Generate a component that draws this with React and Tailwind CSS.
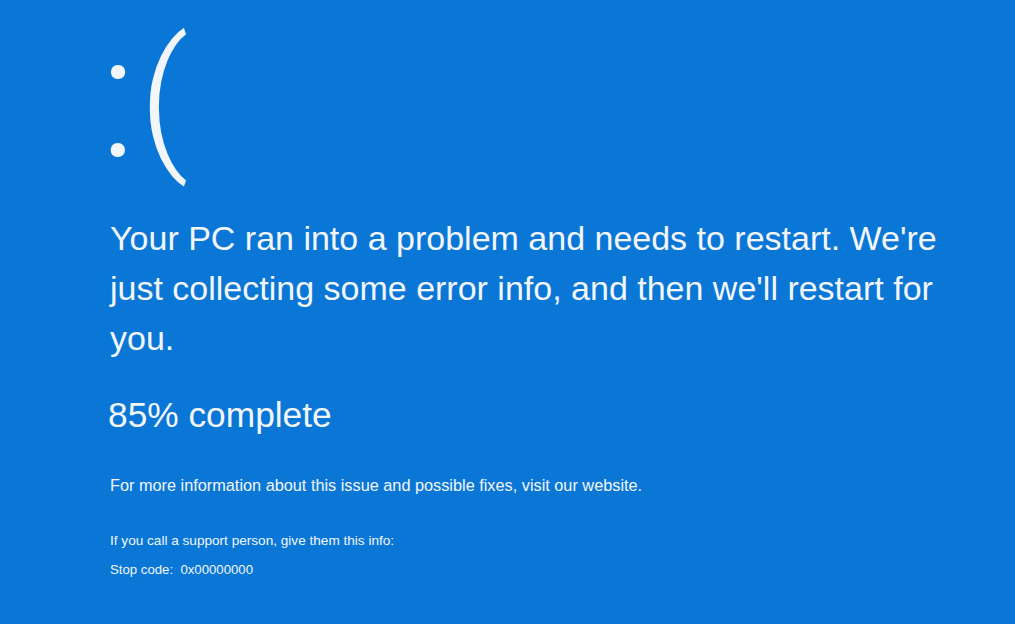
export default function App() {
  return (
    <div
      className="w-[1015px] h-[624px] overflow-hidden bg-[#0a77d6] text-[#f2f6fb] pl-[110px] flex flex-col"
      style={{ fontFamily: '"Liberation Sans", Arial, sans-serif' }}
    >
      <div className="flex items-start h-[200px] -ml-[10px]" style={{ fontFamily: 'Roboto, "Liberation Sans", sans-serif' }}>
        <span className="text-[172px] leading-[1.1] font-light mt-[3px]">:</span>
        <span className="text-[154px] leading-[1.1] font-light ml-[3px] mt-[14px]">(</span>
      </div>
      <p className="text-[34px] leading-[50px] w-[860px] mt-[13px]">
        Your PC ran into a problem and needs to restart. We're just collecting some error info, and then we'll restart for you.
      </p>
      <p className="text-[35.3px] leading-[50px] mt-[27px] -ml-[2px]">85% complete</p>
      <p className="text-[16.3px] leading-[20px] mt-[35px]">
        For more information about this issue and possible fixes, visit our website.
      </p>
      <p className="text-[13.6px] leading-[16px] mt-[38px]">If you call a support person, give them this info:</p>
      <p className="text-[13.2px] leading-[16px] mt-[13px]">Stop code:&nbsp;&nbsp;0x00000000</p>
    </div>
  );
}
